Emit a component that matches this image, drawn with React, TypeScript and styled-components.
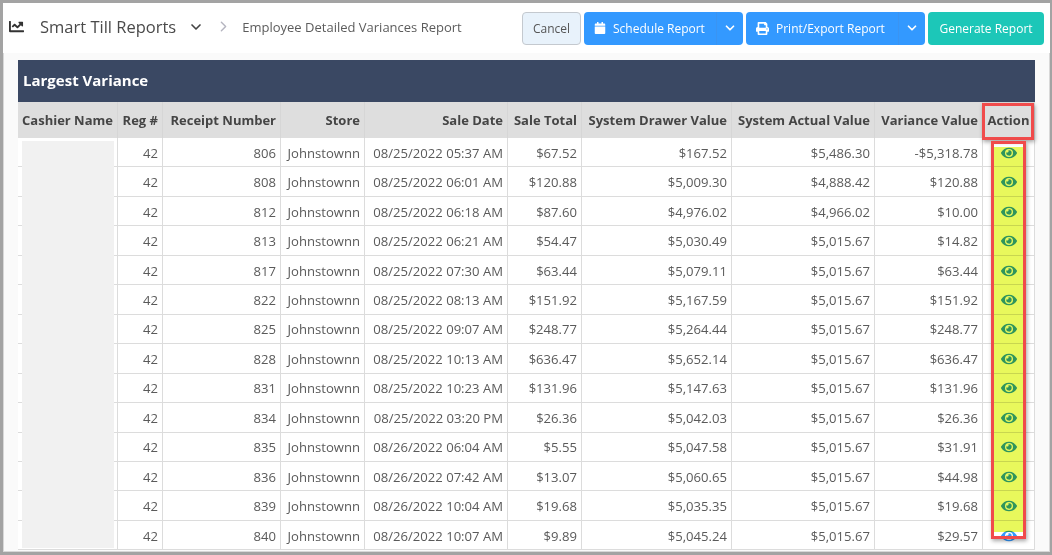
import * as React from "react";
import styled, { createGlobalStyle } from "styled-components";
import { FaCalendar, FaChartLine, FaEye, FaPrint } from "react-icons/fa";
import { ChevronDown, ChevronRight } from "lucide-react";

const GlobalStyle = createGlobalStyle`
  html, body {
    margin: 0;
    padding: 0;
    background: #fff;
    overflow: hidden;
  }
  * {
    box-sizing: border-box;
  }
`;

const Frame = styled.div`
  width: 1052px;
  height: 555px;
  border-style: solid;
  border-color: #a3a3a3;
  border-width: 3px 2px 3px 3px;
  box-shadow: inset 0 0 0 1px #d8d8d8;
  background: #fafafa;
  font-family: "Open Sans", "Liberation Sans", sans-serif;
  overflow: hidden;
  position: relative;
`;

const Toolbar = styled.div`
  height: 50px;
  background: #fff;
  display: flex;
  align-items: center;
  padding: 0 6px 0 6px;
  color: #555;
`;

const Breadcrumb = styled.div`
  flex: 1;
  display: flex;
  align-items: center;
  padding-bottom: 3px;
`;

const Title = styled.span`
  font-size: 16.5px;
  color: #4a4a4a;
  margin-left: 16px;
`;

const TitleCaret = styled(ChevronDown)`
  margin-left: 12px;
  color: #444;
`;

const CrumbSeparator = styled(ChevronRight)`
  margin-left: 11px;
  color: #b5b5c0;
`;

const Crumb = styled.span`
  font-size: 13px;
  color: #5c5c5c;
  margin-left: 10px;
`;

const Button = styled.button<{ $bg: string; $w: number }>`
  width: ${p => p.$w}px;
  height: 33px;
  margin-left: 3px;
  padding: 0;
  border: 0;
  border-radius: 4px;
  background: ${p => p.$bg};
  color: #fff;
  font-family: inherit;
  font-size: 12px;
  display: flex;
  align-items: center;
  justify-content: center;
`;

const CancelButton = styled(Button)`
  border: 1px solid #c4c9cf;
  color: #555;
`;

const SplitLabel = styled.span`
  flex: 1;
  height: 100%;
  display: flex;
  align-items: center;
  gap: 7px;
  padding-left: 10px;
`;

const SplitCaret = styled.span`
  width: 27px;
  height: 100%;
  display: flex;
  align-items: center;
  justify-content: center;
  border-left: 1px solid #3a94f2;
`;

const Content = styled.div`
  padding: 7px 15px 0 15px;
`;

const Panel = styled.div`
  width: 1017px;
  background: #fff;
`;

const Banner = styled.div`
  height: 42px;
  background: #3a4863;
  color: #fff;
  font-size: 15px;
  font-weight: 700;
  display: flex;
  align-items: center;
  padding: 0 0 2px 5px;
`;

const Row = styled.div<{ $head?: boolean }>`
  display: grid;
  grid-template-columns: 100px 45px 118px 84px 143px 74px 150px 143px 108px 51px;
  height: ${p => (p.$head ? "36px" : "29.46px")};
  background: ${p => (p.$head ? "#dedede" : "#fff")};
  border-right: 1px solid ${p => (p.$head ? "#dedede" : "#dcdcdc")};
`;

const Cell = styled.div<{ $head?: boolean; $align?: string }>`
  display: flex;
  align-items: center;
  justify-content: ${p => p.$align || "flex-end"};
  padding: ${p => (p.$head ? "0 4px" : "1px 4px 0")};
  white-space: nowrap;
  font-size: ${p => (p.$head ? "13px" : "13.1px")};
  font-weight: ${p => (p.$head ? 700 : 400)};
  color: ${p => (p.$head ? "#454545" : "#5a5a5a")};
  border-right: 1px solid ${p => (p.$head ? "#d6d6d6" : "#dcdcdc")};
  border-bottom: ${p => (p.$head ? "0" : "1px solid #dcdcdc")};

  &:last-child {
    border-right: 0;
  }
`;

const EyeIcon = styled(FaEye)`
  color: #3399ff;
  font-size: 16px;
`;

const Body = styled.div`
  position: relative;
`;

const NameMask = styled.div`
  position: absolute;
  left: 4px;
  top: 3px;
  width: 92px;
  height: 407px;
  background: #f1f1f1;
`;

/* the highlighter and the red call-outs were drawn on top of the screenshot */
const Highlight = styled.div`
  position: absolute;
  left: 990px;
  top: 144px;
  width: 31px;
  height: 385px;
  background: #e8f85c;
  mix-blend-mode: multiply;
`;

const Callout = styled.div<{ $x: number; $y: number; $w: number; $h: number }>`
  position: absolute;
  left: ${p => p.$x}px;
  top: ${p => p.$y}px;
  width: ${p => p.$w}px;
  height: ${p => p.$h}px;
  border: 3px solid #f04b4b;
  box-shadow: 1px 2px 4px rgba(0, 0, 0, 0.35);
`;

const rows = [
  ["806", "08/25/2022 05:37 AM", "$67.52", "$167.52", "$5,486.30", "-$5,318.78"],
  ["808", "08/25/2022 06:01 AM", "$120.88", "$5,009.30", "$4,888.42", "$120.88"],
  ["812", "08/25/2022 06:18 AM", "$87.60", "$4,976.02", "$4,966.02", "$10.00"],
  ["813", "08/25/2022 06:21 AM", "$54.47", "$5,030.49", "$5,015.67", "$14.82"],
  ["817", "08/25/2022 07:30 AM", "$63.44", "$5,079.11", "$5,015.67", "$63.44"],
  ["822", "08/25/2022 08:13 AM", "$151.92", "$5,167.59", "$5,015.67", "$151.92"],
  ["825", "08/25/2022 09:07 AM", "$248.77", "$5,264.44", "$5,015.67", "$248.77"],
  ["828", "08/25/2022 10:13 AM", "$636.47", "$5,652.14", "$5,015.67", "$636.47"],
  ["831", "08/25/2022 10:23 AM", "$131.96", "$5,147.63", "$5,015.67", "$131.96"],
  ["834", "08/25/2022 03:20 PM", "$26.36", "$5,042.03", "$5,015.67", "$26.36"],
  ["835", "08/26/2022 06:04 AM", "$5.55", "$5,047.58", "$5,015.67", "$31.91"],
  ["836", "08/26/2022 07:42 AM", "$13.07", "$5,060.65", "$5,015.67", "$44.98"],
  ["839", "08/26/2022 10:04 AM", "$19.68", "$5,035.35", "$5,015.67", "$19.68"],
  ["840", "08/26/2022 10:07 AM", "$9.89", "$5,045.24", "$5,015.67", "$29.57"]
];

const headers = [
  "Cashier Name",
  "Reg #",
  "Receipt Number",
  "Store",
  "Sale Date",
  "Sale Total",
  "System Drawer Value",
  "System Actual Value",
  "Variance Value",
  "Action"
];

export default function App() {
  return (
    <Frame>
      <GlobalStyle />
      <Toolbar>
        <Breadcrumb>
          <FaChartLine size={15} color="#333" />
          <Title>Smart Till Reports</Title>
          <TitleCaret size={16} strokeWidth={2.5} />
          <CrumbSeparator size={17} strokeWidth={2} />
          <Crumb>Employee Detailed Variances Report</Crumb>
        </Breadcrumb>
        <CancelButton $bg="#e8f2fb" $w={59}>
          Cancel
        </CancelButton>
        <Button $bg="#3399ff" $w={159}>
          <SplitLabel>
            <FaCalendar size={12} />
            Schedule Report
          </SplitLabel>
          <SplitCaret>
            <ChevronDown size={14} strokeWidth={3} />
          </SplitCaret>
        </Button>
        <Button $bg="#3399ff" $w={179}>
          <SplitLabel>
            <FaPrint size={13} />
            Print/Export Report
          </SplitLabel>
          <SplitCaret>
            <ChevronDown size={14} strokeWidth={3} />
          </SplitCaret>
        </Button>
        <Button $bg="#1cc7b8" $w={116}>
          Generate Report
        </Button>
      </Toolbar>
      <Content>
        <Panel>
          <Banner>Largest Variance</Banner>
          <Row $head>
            {headers.map((h, i) => (
              <Cell $head key={h} $align={i === 0 || i === 9 ? "center" : "flex-end"}>
                {h}
              </Cell>
            ))}
          </Row>
          <Body>
            {rows.map(r => (
              <Row key={r[0]}>
                <Cell />
                <Cell>42</Cell>
                <Cell>{r[0]}</Cell>
                <Cell>Johnstownn</Cell>
                <Cell>{r[1]}</Cell>
                <Cell>{r[2]}</Cell>
                <Cell>{r[3]}</Cell>
                <Cell>{r[4]}</Cell>
                <Cell>{r[5]}</Cell>
                <Cell $align="center">
                  <EyeIcon />
                </Cell>
              </Row>
            ))}
            <NameMask />
          </Body>
        </Panel>
      </Content>
      <Highlight />
      <Callout $x={979} $y={100} $w={52} $h={37} />
      <Callout $x={988} $y={138} $w={35} $h={398} />
    </Frame>
  );
}
